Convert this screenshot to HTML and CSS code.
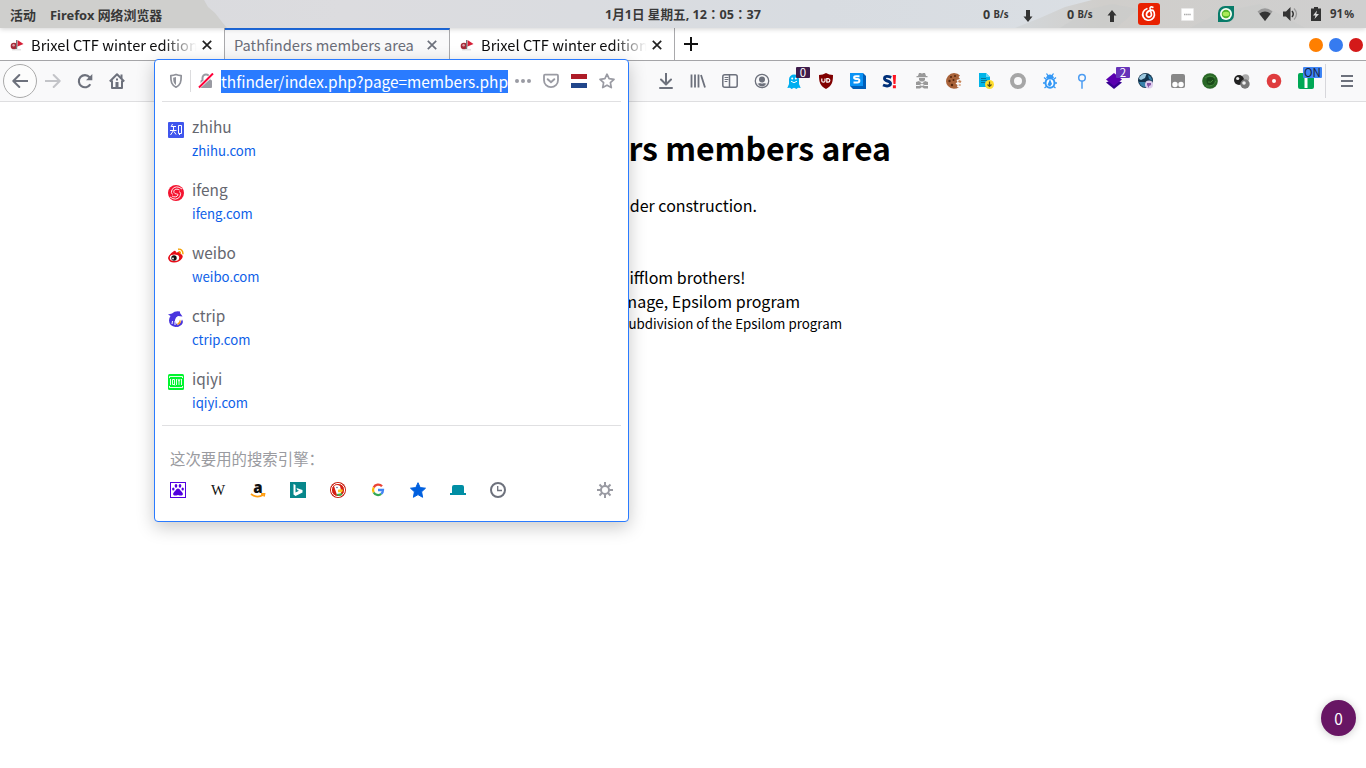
FILE: index.html
```html
<!DOCTYPE html>
<html lang="zh-CN">
<head>
<meta charset="utf-8">
<title>Pathfinders members area</title>
<link rel="stylesheet" href="styles.css">
</head>
<body>
<div class="desktop">
  <header class="topbar">
    <svg class="wallpaper" viewBox="0 0 1366 28" preserveAspectRatio="none">
      <defs>
        <linearGradient id="sky" x1="0" x2="1"><stop offset="0" stop-color="#d7d9dd"/><stop offset=".25" stop-color="#dcdcdf"/><stop offset=".6" stop-color="#d8dce1"/><stop offset="1" stop-color="#dce1e6"/></linearGradient>
        <linearGradient id="rock" x1="0" x2="1"><stop offset="0" stop-color="#d3d7da"/><stop offset=".25" stop-color="#d0cecb"/><stop offset="1" stop-color="#cfcfcf"/></linearGradient>
      </defs>
      <path fill="url(#sky)" d="M0 0h1366v28H0z"/>
      <path fill="#cfcfcd" d="M0 0h204l4 7 7 6 7 9 5 6H0z"/>
      <path fill="url(#rock)" d="M1015 28l25-10 25-11 27-7h274v28z"/>
      <path fill="#c6c8c9" opacity=".35" d="M1060 28l30-19 22-5 26 5-22 19zM1190 28l30-16 40-8 45 24z"/>
    </svg>
    <span class="act">活动</span>
    <span class="app">Firefox 网络浏览器</span>
    <span class="clock">1月1日 星期五, 12<i lang="zh-TW">：</i>05<i lang="zh-TW">：</i>37</span>
    <div class="tray">
      <span class="net">0 <small>B/s</small></span>
      <svg class="arr" width="10" height="12" viewBox="0 0 10 12"><path fill="#333" d="M3 0h4v6.500H9.500L5 12 .5 6.500H3z"/></svg>
      <span class="net net2">0 <small>B/s</small></span>
      <svg class="arr" width="10" height="12" viewBox="0 0 10 12"><path fill="#333" d="M3 12h4V5.500H9.500L5 0 .5 5.500H3z"/></svg>
      <svg class="music" width="22" height="22" viewBox="0 0 22 22"><rect width="22" height="22" rx="3" fill="#e92100"/><g fill="none" stroke="#fff" stroke-width="1.700" stroke-linecap="round"><path d="M8.800 5.700A5.900 5.900 0 1 0 15 7.400C13.400 6.700 8.500 8 8.500 11.400a2.500 2.500 0 1 0 4.900-.4L12.100 6c-.4-2 1.400-2.600 2.700-1.700"/></g></svg>
      <svg class="card" width="13" height="13" viewBox="0 0 13 13"><path fill="#fff" stroke="#ddd" stroke-width=".5" d="M.3.300h12.400v12.400H.3z"/><path stroke="#aaa" stroke-width="1.500" stroke-dasharray="1.500 .6" d="M3 6.500h7"/></svg>
      <svg class="leaf" width="16" height="16" viewBox="0 0 16 16"><path fill="#087b69" d="M16 0v9a7 7 0 0 1-7 7H0V7a7 7 0 0 1 7-7z"/><circle cx="8" cy="8" r="6" fill="#f8fff6"/><circle cx="8" cy="8" r="4.300" fill="#55b52b"/><ellipse cx="8" cy="8" rx="3.300" ry="2.200" fill="#aceb58"/></svg>
      <svg class="wifi" width="16" height="13" viewBox="0 0 16 13"><path fill="#999" d="M8 13L.5 3.500Q8-3 15.500 3.500z"/><path fill="#333" d="M8 13L2.300 5.800Q8 1.200 13.700 5.800z"/></svg>
      <svg class="vol" width="15" height="14" viewBox="0 0 15 14"><path fill="#333" d="M0 4.500h3L7.500 0v14L3 9.500H0z"/><path fill="none" stroke="#333" stroke-width="1.500" d="M9 4q2.500 3 0 6"/><path fill="none" stroke="#999" stroke-width="1.300" d="M11 1.500q5 5.500 0 11"/></svg>
      <svg class="batt" width="10" height="14" viewBox="0 0 10 14"><path fill="#333" d="M3 0h4v1.500h3V14H0V1.500h3z"/><path fill="#ddd" d="M6 3.500L2 8.500h2.500L3.500 12 8 7H5.300z"/></svg>
      <span class="pct">91<em>%</em></span>
    </div>
  </header>

  <nav class="tabs">
    <div class="tab">
      <svg class="fav" width="14" height="12" viewBox="0 0 14 12"><path fill="#d51f37" d="M7.500 1l6 4-6 2.500z"/><circle cx="4" cy="7" r="3.300" fill="#a52a38"/><path fill="#777" d="M6 1h1.200v9H6z"/><circle cx="3.600" cy="6.300" r="1.200" fill="#dca0a8"/><path fill="#bbb" opacity=".6" d="M2 10.300h9v1H2z"/></svg>
      <span class="label fade">Brixel CTF winter edition</span>
      <svg class="x" width="10" height="10" viewBox="0 0 10 10"><path d="M.8.800l8.400 8.400M9.200.800L.8 9.200"/></svg>
    </div>
    <div class="tab active">
      <span class="label">Pathfinders members area</span>
      <svg class="x" width="10" height="10" viewBox="0 0 10 10"><path d="M.8.800l8.400 8.400M9.200.800L.8 9.200"/></svg>
    </div>
    <div class="tab third">
      <svg class="fav" width="14" height="12" viewBox="0 0 14 12"><path fill="#d51f37" d="M7.500 1l6 4-6 2.500z"/><circle cx="4" cy="7" r="3.300" fill="#a52a38"/><path fill="#777" d="M6 1h1.200v9H6z"/><circle cx="3.600" cy="6.300" r="1.200" fill="#dca0a8"/><path fill="#bbb" opacity=".6" d="M2 10.300h9v1H2z"/></svg>
      <span class="label fade">Brixel CTF winter edition</span>
      <svg class="x" width="10" height="10" viewBox="0 0 10 10"><path d="M.8.800l8.400 8.400M9.200.800L.8 9.200"/></svg>
    </div>
    <svg class="plus" width="14" height="14" viewBox="0 0 14 14"><path stroke="#111" stroke-width="2" d="M7 0v14M0 7h14"/></svg>
    <div class="dots"><i class="orange"></i><i class="blue"></i><i class="red"></i></div>
  </nav>

  <div class="toolbar">
    <div class="back"><svg width="16" height="16" viewBox="0 0 16 16" class="line"><path d="M15.500 8H1.500M7.300 2L1.300 8l6 6"/></svg></div>
    <div class="navs">
      <svg width="16" height="16" viewBox="0 0 16 16" class="line pale"><path d="M.5 8h14M8.700 2l6 6-6 6"/></svg>
      <svg width="16" height="16" viewBox="0 0 16 16"><path fill="none" stroke="#6d717c" stroke-width="2.100" d="M13.300 11.200A6.100 6.100 0 1 1 12.600 4.200"/><path fill="#6d717c" d="M15.300 1v6.300H9z"/></svg>
      <svg width="16" height="16" viewBox="0 0 16 16"><path fill="none" stroke="#6d717c" stroke-width="2" stroke-linejoin="round" d="M.8 8.500L8 1.300l7.200 7.200M3 7.500V15h10V7.500"/><path fill="#6d717c" d="M6.500 9h3v6h-3zM11.500 1.500h2v4h-2zM7 5.500h2v2H7z"/></svg>
    </div>
    <div class="exts">
      <svg width="16" height="16" viewBox="0 0 16 16" class="line"><path d="M8 .500v10.500M3 6.500l5 5 5-5M2 15h12"/></svg>
      <svg width="16" height="16" viewBox="0 0 16 16" class="line lib"><path d="M1.500 1.500v13M5 1.500v13M8.500 1.500v13M11 2l4 12.500"/></svg>
      <svg width="16" height="16" viewBox="0 0 16 16" class="line thin"><rect x=".8" y="1.800" width="14.400" height="12.400" rx="2"/><path d="M7.500 2v12"/><path stroke-width="1" d="M3 4.500h3M3 6.500h3M3 8.500h2"/></svg>
      <svg width="16" height="16" viewBox="0 0 16 16"><circle cx="8" cy="8" r="6.700" fill="none" stroke="#6d717c" stroke-width="1.300"/><circle cx="8" cy="6.500" r="3" fill="#6d717c"/><path fill="#6d717c" d="M3.500 10.500q1.500 0 2.500-.5 2 1 4 0 1 .5 2.500.5Q10.500 13.500 8 13.500T3.500 10.500z"/></svg>
      <div class="ext"><svg width="16" height="16" viewBox="0 0 16 16"><path fill="#00aef0" d="M3 6.500a5 5 0 0 1 10 0V11l1.700 4-2.700-.3L10.500 16 8 14.800 5.500 16 4 14.700l-2.700.3L3 11z"/><circle cx="6.200" cy="5.500" r="1" fill="#fff"/><circle cx="9.800" cy="5.500" r="1" fill="#fff"/><path fill="none" stroke="#fff" d="M5 8.200q3 3 6 0"/></svg><b class="badge plum">0</b></div>
      <svg width="16" height="16" viewBox="0 0 16 16"><path fill="#800000" d="M8 0q3 2 7 2c0 7-1 11-7 14C2 13 1 9 1 2q4 0 7-2z"/><path fill="none" stroke="#fff" stroke-width="1.200" d="M3.800 5.500V8q0 1.200 1.600 1.200T7 8V5.500"/><path fill="none" stroke="#fff" stroke-width="1.200" d="M8.800 5.700v3.400h1.300a1.700 1.700 0 0 0 0-3.400z"/></svg>
      <svg width="16" height="16" viewBox="0 0 16 16"><path fill="#005eb8" d="M0 0h13l3 3v13H3l-3-3z"/><path fill="#0a93f5" d="M0 0h13v13H0z"/><path fill="none" stroke="#fff" stroke-width="2" d="M9.500 3.300H6C3.500 3.300 3.500 6 6 6h1.500c2.500 0 2.500 3.500 0 3.500h-4"/></svg>
      <svg width="16" height="16" viewBox="0 0 16 16"><path fill="none" stroke="#003078" stroke-width="2.900" d="M9.300 4.300C5.500 2.900 2.500 3 2.500 5.500c0 3 6 2 6 5 0 2.800-4 3-7.500 1.500"/><path fill="#ff1420" d="M10.700 2h3.300L13.500 11h-2zM10.900 12.300h3v2.900h-3z"/></svg>
      <svg width="16" height="16" viewBox="0 0 16 16" fill="#999"><path d="M5 0h2l1 .8L9 0h2l1 3h1.500v1.200h-11V3H4zM5 5h6v2L9.500 8.500h-3L5 7z"/><path d="M2 9l3-1 3 2.500L11 8l3 1v3h-3.500L8 10.800 5.500 12H2zM2 13h3l2-.8 1 1 1-1 2 .8h3v2.500h-4L8 14l-2 1.500H2z"/></svg>
      <svg width="16" height="16" viewBox="0 0 16 16"><path fill="#a9633a" d="M8 0q4 0 6 2.500l-1.500 1.500L14 6l-3.500 1 1 2-2 1.500 2 1.500-.5 2 2 .5Q6 17.500 2 13T2 3q2.500-3 6-3z"/><g fill="#57280f"><circle cx="5" cy="4" r="1.100"/><circle cx="9" cy="3" r="1"/><circle cx="3.500" cy="8" r="1.200"/><circle cx="7.500" cy="7" r="1"/><circle cx="6" cy="12" r="1.200"/></g><path fill="#c88456" d="M13 7l2.500 1-1 2-2.500-1zM12 12l2.500-1v2z"/></svg>
      <svg width="16" height="16" viewBox="0 0 16 16"><path fill="#00b4e8" d="M1 0h7l4 4v10H1z"/><path fill="#64d7f5" d="M8 0l4 4H8z"/><path stroke="#087798" stroke-width="1" d="M3 5.500h5M3 7.500h6M3 9.500h4"/><circle cx="11.500" cy="11.500" r="4.500" fill="#ffdd2d"/><path fill="none" stroke="#554d18" stroke-width="1.200" d="M11.500 8.500v5M9.500 11.500l2 2 2-2"/></svg>
      <svg width="16" height="16" viewBox="0 0 16 16"><circle cx="8" cy="8" r="6" fill="none" stroke="#a6a6a6" stroke-width="4"/></svg>
      <svg width="16" height="16" viewBox="0 0 16 16"><g fill="none" stroke="#3498f5" stroke-width="1.300"><path d="M4.500.500l2 3M11.500.500l-2 3M2 4.500l2.500 2M14 4.500l-2.500 2M1 10h3M15 10h-3M2.500 15l2.500-2M13.500 15L11 13"/></g><path fill="#3498f5" d="M4 5Q5 1.500 8 1.500T12 5z"/><ellipse cx="8" cy="10" rx="4.500" ry="4.800" fill="#fff" stroke="#3498f5" stroke-width="2"/><path fill="#3498f5" d="M8 6l2 5-2 2.500-2.500-1.500z"/></svg>
      <svg width="16" height="16" viewBox="0 0 16 16"><g fill="none" stroke="#4b9cf2" stroke-width="1.500"><circle cx="8" cy="4.700" r="3.300"/><path d="M8 8v7.700"/></g></svg>
      <div class="ext"><svg width="16" height="16" viewBox="0 0 16 16"><path fill="#36008f" d="M0 9.500L8 6l8 3.500L8 16z"/><path fill="#5a00af" d="M0 6.500L8 0l8 6.500L8 13z"/></svg><b class="badge violet">2</b></div>
      <svg width="16" height="16" viewBox="0 0 16 16"><circle cx="7.500" cy="7.500" r="7.500" fill="#12334d"/><path fill="#9cc9e0" d="M1.500 4q3-4 7-3L7 5 3 7 1 6z"/><path fill="#3781aa" d="M10 2l3 2 1.500 4L11 6zM1 9h6l2 5q-6 1-8-5z"/><circle cx="11" cy="11.500" r="4" fill="#dccdec"/><path fill="#8655a5" d="M9 10h4v2l-2 1v2l-2-3z"/></svg>
      <svg width="16" height="16" viewBox="0 0 16 16"><rect x="1" y="1" width="14" height="14" rx="2" fill="#888"/><circle cx="5" cy="11.500" r="2.700" fill="#fff"/><circle cx="11" cy="11.500" r="2.700" fill="#fff"/></svg>
      <svg width="16" height="16" viewBox="0 0 16 16"><circle cx="8" cy="8" r="7.800" fill="#2a6827"/><path fill="none" stroke="#478a3e" stroke-width="1" d="M3 5q5-4 10 0M4 13q7 1 10-5"/><circle cx="8.500" cy="8" r="4" fill="#1b4c1a"/><path fill="none" stroke="#4b8c40" stroke-width=".9" d="M6 9q3 1.500 5-2"/></svg>
      <svg width="16" height="16" viewBox="0 0 16 16"><circle cx="11.500" cy="5" r="3.800" fill="#aaa"/><circle cx="5" cy="7" r="5" fill="#222"/><circle cx="11" cy="11" r="4.700" fill="#777"/><circle cx="3.700" cy="5.500" r="1.600" fill="#eee"/><circle cx="10" cy="10" r="1.800" fill="#f2f2f2"/></svg>
      <svg width="16" height="16" viewBox="0 0 16 16"><circle cx="8" cy="8" r="7.300" fill="#df3c3e"/><circle cx="8" cy="8" r="2" fill="#fff"/></svg>
      <div class="ext"><svg width="16" height="16" viewBox="0 0 16 16"><rect width="16" height="16" rx="2" fill="#00a855"/><path stroke="#fff" stroke-width="3" d="M8 3.500V15"/></svg><b class="badge on">ON</b></div>
    </div>
    <div class="menu"><svg width="12" height="12" viewBox="0 0 12 12"><path stroke="#6d717c" stroke-width="2" d="M0 1h12M0 6h12M0 11h12"/></svg></div>
  </div>

  <main class="page">
    <h1>rs members area</h1>
    <p class="p1">der construction.</p>
    <p class="p2">ifflom brothers!</p>
    <p class="p3">mage, Epsilom program</p>
    <p class="p4">ubdivision of the Epsilom program</p>
  </main>

  <section class="popup">
    <div class="urlbar">
      <svg class="shield" width="14" height="16" viewBox="0 0 14 16"><path fill="none" stroke="#8f9199" stroke-width="1.700" stroke-linejoin="round" d="M7 1.500q2.500 1 5.200 1.200C12.200 9 11.500 12 7 14.200 2.500 12 1.800 9 1.800 2.700 4.500 2.500 7 1.500 7 1.500z"/><path fill="#8f9199" d="M7 4v8C4.800 10.500 4.200 9 4.200 4.800z"/></svg>
      <i class="sep"></i>
      <svg class="lock" width="16" height="16" viewBox="0 0 16 16"><path fill="none" stroke="#9a9ba3" stroke-width="2" d="M4.500 8V5a3.500 3.500 0 0 1 7 0v3"/><rect x="2.500" y="7" width="11.500" height="8" rx="1" fill="#9a9ba3"/><path stroke="#fff" stroke-width="3.500" d="M1 14L15 1"/><path stroke="#ff0039" stroke-width="2" d="M1 14.500L15 .500"/></svg>
      <span class="url">thfinder/index.php?page=members.php</span>
      <svg class="more" width="16" height="4" viewBox="0 0 16 4" fill="#9a9ba3"><circle cx="2" cy="2" r="2"/><circle cx="8" cy="2" r="2"/><circle cx="14" cy="2" r="2"/></svg>
      <svg class="pocket" width="16" height="16" viewBox="0 0 16 16"><path fill="none" stroke="#9a9ba3" stroke-width="1.800" stroke-linejoin="round" d="M2 1.700h12q1 0 1 1v4.500a7 7 0 0 1-14 0V2.700q0-1 1-1z"/><path fill="none" stroke="#9a9ba3" stroke-width="2" stroke-linecap="round" d="M4.700 6.200L8 9.200l3.300-3"/></svg>
      <svg class="flag" width="16" height="14" viewBox="0 0 16 14"><path fill="#ae1c28" d="M0 0h16v5H0z"/><path fill="#fff" d="M0 5h16v4H0z"/><path fill="#21468b" d="M0 9h16v5H0z"/></svg>
      <svg class="star" width="16" height="16" viewBox="0 0 16 16"><path fill="none" stroke="#9a9ba3" stroke-width="1.700" stroke-linejoin="round" d="M8 1.200l2.100 4.500 4.900.6-3.600 3.400.9 4.900L8 12.200l-4.300 2.400.9-4.900L1 6.300l4.900-.6z"/></svg>
    </div>
    <ul class="sites">
      <li><svg width="16" height="16" viewBox="0 0 16 16"><rect width="16" height="16" rx="1" fill="#4056ed"/><path fill="none" stroke="#fff" d="M4.500 2L3 5M3.500 4.500H8M2 8.500h6.500M5.500 4.500v4L2.500 13M6 9.500l2 3M10.500 3.500h3v8h-3zM11.500 12v1"/></svg><div><b>zhihu</b><a>zhihu.com</a></div></li>
      <li><svg width="16" height="16" viewBox="0 0 16 16"><circle cx="8" cy="8" r="8" fill="#f41430"/><g fill="none" stroke="#fff" stroke-width=".9"><path d="M11.500 5C8 3 5 5 6 7.500S10.500 8 10 10s-4 2.500-6 1"/><path d="M14 4Q8-.5 4 4.500 2.500 8 4.500 9.500M2 12q6 4.500 10-.5 1.500-3.500-.5-5"/></g></svg><div><b>ifeng</b><a>ifeng.com</a></div></li>
      <li><svg width="16" height="16" viewBox="0 0 16 16"><path fill="#e60b16" d="M6 3q2-1 2 1.500 5-1.500 4.500 1.500 3.500 1 1.500 4.500Q11 14.500 6 14.500T0 10Q1 6 6 3z"/><ellipse cx="6.500" cy="9.700" rx="4.700" ry="3.300" fill="#fff"/><circle cx="6" cy="10" r="2.700" fill="#111"/><circle cx="5" cy="10.500" r=".9" fill="#fff"/><g fill="none" stroke="#f5a000" stroke-width="1.400"><path d="M10 1.200q5-.5 5 5"/><path d="M10.500 3.500q2 0 2 2.200"/></g></svg><div><b>weibo</b><a>weibo.com</a></div></li>
      <li><svg width="16" height="16" viewBox="0 0 16 16"><path fill="#4935de" d="M0 3.500l4-1Q7-.5 12 .500V2l2.500 3.500L10 5q-2.500 1-3 4t3 5l-2 2Q1 15 1 9.500 1 7 2.500 5z"/><path fill="#4935de" d="M14 8.500Q17 13 10 16l-4-.5q6-1 8-7z"/><path fill="#f39a18" d="M12 8.500q2 3-1 5H8.500q3-2 3.500-5z"/><path stroke="#fff" stroke-width="1" d="M4.500 10l-.5 3M7 10v4"/></svg><div><b>ctrip</b><a>ctrip.com</a></div></li>
      <li><svg width="16" height="16" viewBox="0 0 16 16"><rect width="16" height="16" rx="1.500" fill="#00f52e"/><g fill="none" stroke="#fff" stroke-width=".9"><path d="M1.500 4V2.500h13V4M1.500 12v1.500h13V12M2.500 5v6M4.500 5.500h2v5h-2zM6 10l1 1.500M8.500 5v6M10 5l1 2.500L12 5M11 7.500V11M13.500 5v6"/></g></svg><div><b>iqiyi</b><a>iqiyi.com</a></div></li>
    </ul>
    <div class="engines">
      <p>这次要用的搜索引擎：</p>
      <div class="row">
        <svg width="16" height="16" viewBox="0 0 16 16"><rect x=".5" y=".5" width="15" height="15" fill="#fff" stroke="#5200e0"/><g fill="#5200e0"><ellipse cx="6" cy="3.800" rx="1.300" ry="1.900"/><ellipse cx="10" cy="3.800" rx="1.300" ry="1.900"/><ellipse cx="3.300" cy="7" rx="1.200" ry="1.600"/><ellipse cx="12.700" cy="7" rx="1.200" ry="1.600"/><path d="M8 6.500q1.500 0 2.500 2 3.500 3 2 4.500-1 1-4.500 0-3.500 1-4.500 0Q2 11.500 5.500 8.500q1-2 2.500-2z"/></g></svg>
        <span class="wiki">W</span>
        <span class="amazon">a<svg width="16" height="5" viewBox="0 0 16 5"><path fill="none" stroke="#ff9e12" stroke-width="1.700" d="M1 1q6 4.500 12 1M11 .800h3.500L14 3.500"/></svg></span>
        <svg width="16" height="16" viewBox="0 0 16 16"><path fill="#07878b" d="M0 0h16v16H0z"/><path fill="#fff" d="M3.500 2l2 1v7.500L9 8.700 7.300 8 6.500 6l6 2v2.500L5.500 14l-2-1.500z"/></svg>
        <svg width="16" height="16" viewBox="0 0 16 16"><circle cx="8" cy="8" r="8" fill="#c61d0f"/><circle cx="8" cy="8" r="6.600" fill="#d71f12" stroke="#fff" stroke-width="1"/><path fill="#fff" d="M4 4q3-2 6 0l1 4v3.500l-4 1.500L5 7z"/><path fill="#fbc920" d="M8 7.800q3-1.300 5 0l-1 2.500H8z"/><path fill="#37b54a" d="M6.500 12l5.500-.7v2l-4 .7z"/><circle cx="7" cy="5.500" r=".7" fill="#255084"/></svg>
        <svg width="16" height="16" viewBox="0 0 16 16"><g fill="none" stroke-width="2.300"><path stroke="#ea4335" d="M12 4.300A5 5 0 0 0 3.700 5.500"/><path stroke="#fbbc05" d="M3.700 5.500a5 5 0 0 0 0 5"/><path stroke="#34a853" d="M3.700 10.500a5 5 0 0 0 7.500 1.400"/><path stroke="#4285f4" d="M11.200 11.900A5 5 0 0 0 13 8H8"/></g></svg>
        <svg width="16" height="16" viewBox="0 0 16 16"><path fill="#0060df" stroke="#0060df" stroke-linejoin="round" d="M8 .700l2.200 4.900 5.300.6-3.900 3.600 1 5.500L8 12.600l-4.600 2.700 1-5.500L.5 6.200l5.300-.6z"/></svg>
        <svg width="16" height="16" viewBox="0 0 16 16"><path fill="#008ea4" d="M0 11h2V5q0-2 2-2h8q2 0 2 2v6h2v2H0z"/></svg>
        <svg width="16" height="16" viewBox="0 0 16 16"><g fill="none" stroke="#6d717c"><circle cx="8" cy="8" r="7" stroke-width="2"/><path stroke-width="1.300" d="M7.700 4v4.500H12"/></g></svg>
        <svg class="gear" width="16" height="16" viewBox="0 0 16 16"><g fill="none" stroke="#9a9ba3" stroke-width="2"><circle cx="8" cy="8" r="4"/><path d="M8 0v4M8 12v4M0 8h4M12 8h4M2.500 2.500l2.700 2.700M10.800 10.800l2.700 2.700M13.500 2.500l-2.700 2.700M5.200 10.800l-2.700 2.700"/></g></svg>
      </div>
    </div>
  </section>
  <div class="bubble">0</div>
</div>
</body>
</html>
```
FILE: styles.css
```css
* { box-sizing: border-box; }
body { margin: 0; background: #fff; font-family: "Noto Sans CJK SC", "Noto Sans", sans-serif; }
svg { display: block; flex: none; }
p, h1, ul { margin: 0; padding: 0; }
.desktop { position: relative; width: 1366px; height: 768px; overflow: hidden; display: flex; flex-direction: column; }

/* system bar */
.topbar { position: relative; z-index: 2; height: 28px; flex: none; display: flex; align-items: center; font: bold 12px/28px "Noto Sans", "Noto Sans CJK SC", sans-serif; color: #383838; box-shadow: 0 1px 5px rgba(0,0,0,.18); white-space: nowrap; }
.wallpaper { position: absolute; left: 0; top: 0; width: 1366px; height: 28px; z-index: -1; }
.act, .app, .clock { padding-top: 2px; font-size: 12.9px; }
.act { width: 50px; padding-left: 10px; }
.app { width: 555px; }
.clock { width: 378px; font-size: 12.6px; }
.clock i { font-style: normal; font-family: "Noto Sans CJK TC", sans-serif; line-height: 1; }
.tray { display: flex; align-items: center; }
.net { width: 40px; padding-top: 2px; font-size: 12.5px; }
.net small { font-size: 9.7px; vertical-align: 1px; }
.net2 { margin-left: 34px; }
.arr { margin-top: 4px; }
.music { margin-left: 21px; }
.card { margin-left: 21px; }
.leaf { margin-left: 24px; }
.wifi { margin-left: 23px; }
.vol { margin-left: 10px; }
.batt { margin-left: 13px; }
.pct { margin-left: 9px; font-size: 11.5px; }
.pct em { font-style: normal; margin-left: 1px; font-size: 11px; }

/* tab strip */
.tabs { height: 33px; flex: none; display: flex; border-bottom: 1px solid #a5a5a8; background: #fff; }
.tab { width: 225px; height: 32px; display: flex; align-items: center; padding: 2px 12px 0 10px; border-right: 1px solid #a9a9ac; }
.label { font-size: 14.67px; line-height: 24px; white-space: nowrap; width: 169px; color: #0c0c0d; }
.fade { -webkit-mask-image: linear-gradient(90deg, #000 78%, transparent 98%); mask-image: linear-gradient(90deg, #000 78%, transparent 98%); }
.fav { margin-right: 7px; }
.x { margin-left: 2px; fill: none; stroke: #222; stroke-width: 1.7; }
.active { background: #f9f9fa; border-top: 2px solid #1f6fe8; padding: 0 12px 0 9px; }
.active .label { width: 184px; color: #6a6d78; }
.active .x { margin-left: 9px; stroke: #6d717c; }
.plus { margin: 9px 0 0 9px; }
.dots { margin: 10px 3px 0 auto; display: flex; gap: 6px; }
.dots i { width: 14px; height: 14px; border-radius: 50%; }
.orange { background: #ff7f00; }
.blue { background: #367bf0; }
.red { background: #d41919; }

/* navigation toolbar */
.toolbar { height: 41px; flex: none; display: flex; align-items: center; background: #f9f9fa; border-bottom: 1px solid #dedee0; padding-left: 3px; }
.back { width: 34px; height: 34px; border: 1px solid #aaa; border-radius: 50%; display: flex; align-items: center; justify-content: center; background: #fcfcfc; }
.line { fill: none; stroke: #6d717c; stroke-width: 2; stroke-linecap: round; stroke-linejoin: round; }
.thin { stroke-width: 1.5; }
.lib { stroke-width: 1.8; stroke-linecap: butt; }
.pale { stroke: #c3c4c8; }
.navs { display: flex; gap: 16px; margin-left: 8px; width: 613px; }
.exts { display: flex; gap: 16px; }
.ext { position: relative; }
.badge { position: absolute; left: 10px; top: -6px; width: 14px; height: 11px; font: 11.5px/11px "Noto Sans CJK SC", sans-serif; text-align: center; color: #fff; border-radius: 1px; }
.plum { background: #3f1c4b; }
.violet { background: #6733b9; }
.on { left: 5px; width: 19px; background: #3f84f4; color: #16223c; }
.menu { margin-left: 11px; height: 34px; border-left: 1px solid #d7d7db; padding-left: 15px; display: flex; align-items: center; }

/* web page */
.page { flex: 1; text-align: right; color: #000; font-size: 16px; line-height: 24px; white-space: nowrap; padding-top: 20px; }
.page h1 { font-size: 32px; line-height: 50px; padding-right: 475px; }
.p1 { padding-right: 609px; margin-top: 21px; }
.p2 { padding-right: 620.5px; margin-top: 48px; }
.p3 { padding-right: 566px; }
.p4 { padding-right: 524px; font-size: 13.33px; line-height: 22px; }

/* address popup */
.popup { position: absolute; z-index: 3; left: 154px; top: 59px; width: 475px; height: 463px; background: #fff; border: 1px solid #2a7bff; border-radius: 4px; box-shadow: 0 5px 18px rgba(0,0,0,.22); padding: 0 7px; }
.urlbar { height: 42px; display: flex; align-items: center; border-bottom: 1px solid #e0e0e2; padding-left: 7px; }
.sep { width: 1px; height: 22px; background: #dcdcde; margin: 0 7px; }
.url { margin-left: 7px; width: 287px; height: 23px; background: #2a7bff; color: #fff; font-size: 15.4px; line-height: 23px; white-space: nowrap; margin-top: 2px; }
.more { margin-left: 7px; }
.pocket { margin-left: 12px; }
.flag { margin-left: 12px; }
.star { margin-left: 12px; }
.sites { list-style: none; height: 324px; border-bottom: 1px solid #e0e0e2; padding: 12px 0 0 6px; }
.sites li { display: flex; height: 63px; }
.sites svg { margin: 8px 8px 0 0; }
.sites b, .sites a { display: block; line-height: 24px; }
.sites b { font-weight: 400; font-size: 15.4px; color: #65676f; }
.sites a { font-size: 13.2px; color: #0d60e8; padding-top: 1px; }
.engines { padding: 20px 8px 0; }
.engines p { font-size: 15.4px; line-height: 24px; color: #9a9ba0; }
.row { display: flex; gap: 24px; align-items: center; margin-top: 12px; }
.wiki { width: 16px; height: 16px; font: 15px/17px "Liberation Serif", serif; text-align: center; color: #111; }
.amazon { width: 16px; height: 16px; font: 900 15px/10px "Open Sans", sans-serif; text-align: center; color: #111; }
.amazon svg { margin-top: 1px; }
.gear { margin-left: auto; }
.bubble { position: absolute; z-index: 3; left: 1321px; top: 700px; width: 35px; height: 36px; border-radius: 50%; background: #681664; color: #fff; font-size: 15.4px; line-height: 37px; text-align: center; box-shadow: 0 1px 8px rgba(0,0,0,.2); }
```
